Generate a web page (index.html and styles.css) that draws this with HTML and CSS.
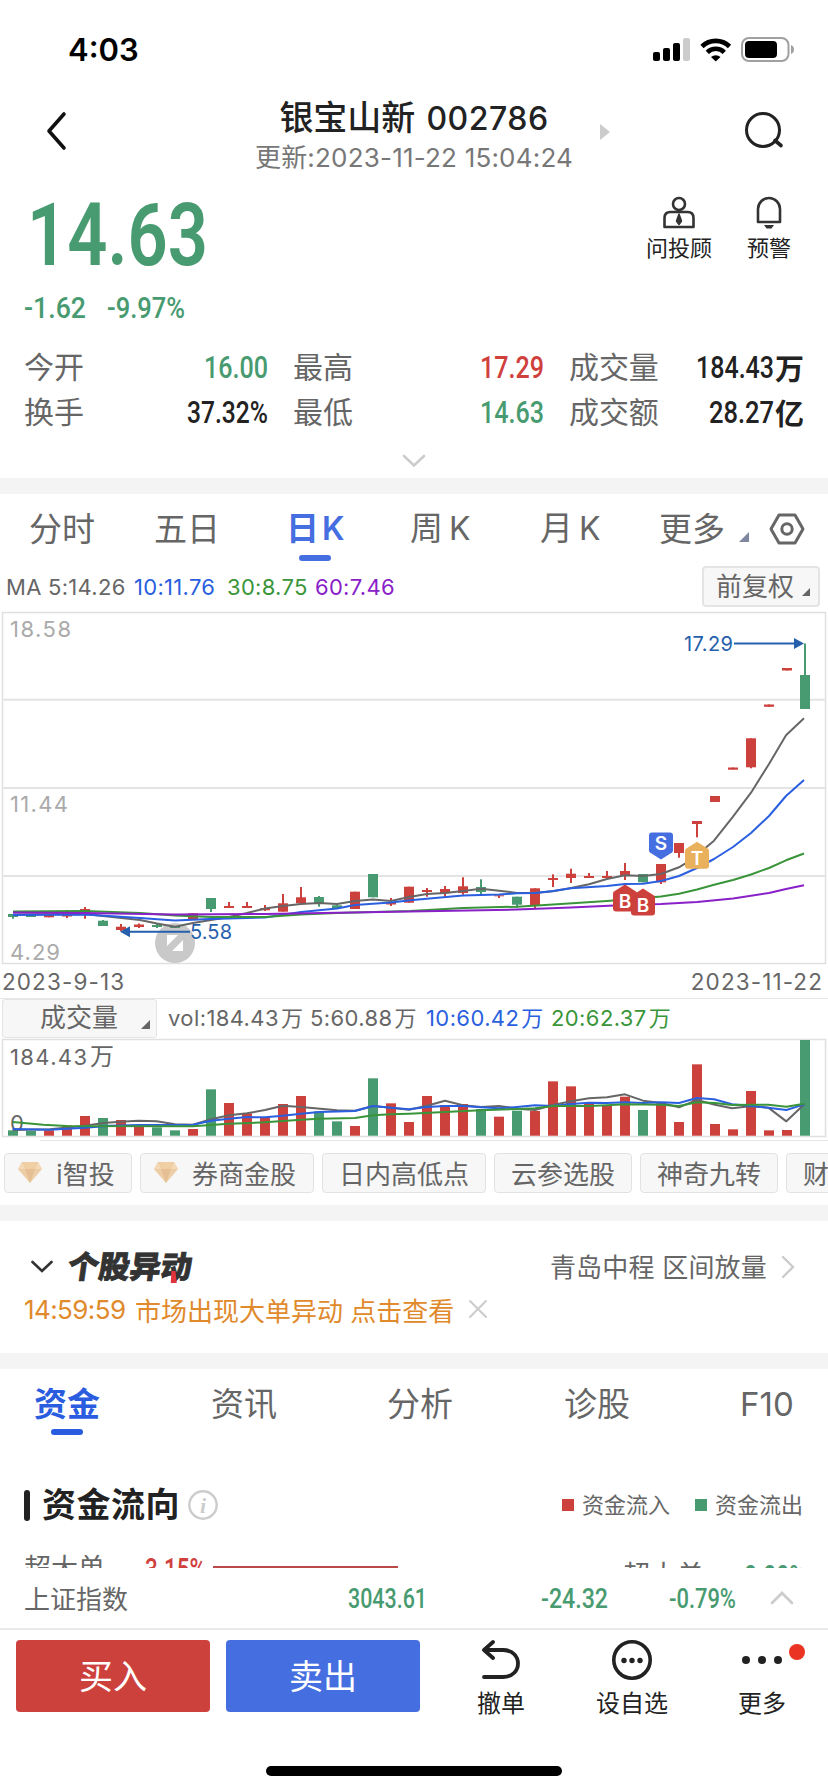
FILE: index.html
```html
<!DOCTYPE html>
<html lang="zh-CN">
<head>
<meta charset="utf-8">
<title>银宝山新 002786</title>
<link rel="stylesheet" href="styles.css">
</head>
<body>
<div class="phone">
  <header class="status">
    <span class="clock">4:03</span>
    <svg class="status-icons" width="144" height="30" viewBox="650 34 144 30">
      <g fill="#000"><rect x="653" y="52" width="7" height="9" rx="2"/><rect x="663" y="48" width="7" height="13" rx="2"/><rect x="673" y="43" width="7" height="18" rx="2"/></g>
      <rect x="683" y="38" width="7" height="23" rx="2" fill="#ccc"/>
      <g fill="none" stroke="#000" stroke-width="4.6">
        <path d="M702 46.500a19.500 19.500 0 0 1 27.500 0"/><path d="M707.300 52.300a12 12 0 0 1 17 0"/>
      </g>
      <path d="M711 57a7 7 0 0 1 9.500 0l-4.750 4.500z" fill="#000"/>
      <rect x="742" y="38" width="46.500" height="23" rx="7" fill="none" stroke="#a0a0a0" stroke-width="2"/>
      <rect x="745" y="41" width="32" height="17" rx="4"/>
      <path d="M791 45v9c4-1 4-8 0-9z" fill="#a0a0a0"/>
    </svg>
  </header>

  <nav class="nav">
    <svg class="back" width="24" height="42" viewBox="0 0 24 42"><path d="M20 4 5 21l15 17" fill="none" stroke="#111" stroke-width="3.600" stroke-linecap="round" stroke-linejoin="round"/></svg>
    <div class="title">
      <div class="name">银宝山新 <span class="code">002786</span></div>
      <div class="updated">更新:2023-11-22 15:04:24</div>
    </div>
    <svg class="next" width="10" height="16" viewBox="0 0 10 16"><path d="M0 0l10 8-10 8z" fill="#ccc"/></svg>
    <svg class="search" width="44" height="40" viewBox="0 0 44 40"><circle cx="21" cy="19" r="16.500" fill="none" stroke="#222" stroke-width="3"/><path d="M33 29.500l6 5" stroke="#222" stroke-width="3.600" stroke-linecap="round"/></svg>
  </nav>

  <section class="quote">
    <div class="price-row">
      <div>
        <svg class="num up price" width="190" height="80"><text x="3" y="74" textLength="181" lengthAdjust="spacingAndGlyphs">14.63</text></svg>
        <svg class="num down change" width="190" height="32"><text x="0" y="28" textLength="62" lengthAdjust="spacingAndGlyphs">-1.62</text><text x="83" y="28" textLength="78" lengthAdjust="spacingAndGlyphs">-9.97%</text></svg>
      </div>
      <div class="actions">
        <div class="action">
          <svg width="34" height="36" viewBox="0 0 34 36" fill="none" stroke="#333" stroke-width="2.600" stroke-linejoin="round"><circle cx="17" cy="9" r="6"/><path d="M2.500 32V23q0-6 6-6h17q6 0 6 6v9z"/><path d="M17 19l2.500 7-2.500 3.500-2.500-3.500z" fill="#333" stroke-width="1.500"/></svg>
          <span>问投顾</span>
        </div>
        <div class="action">
          <svg width="34" height="36" viewBox="0 0 34 36" fill="none" stroke="#333" stroke-width="2.600" stroke-linejoin="round"><path d="M6 27V14a11 11 0 0 1 22 0v13z"/><path d="M12 30h10l-2.500 3.500h-5z" fill="#333" stroke="none"/></svg>
          <span>预警</span>
        </div>
      </div>
    </div>
    <div class="stats">
      <span class="k">今开</span><svg class="num down" width="65" height="30"><text x="1" y="26" textLength="64" lengthAdjust="spacingAndGlyphs">16.00</text></svg>
      <span class="k next-col">最高</span><svg class="num red" width="65" height="30"><text x="1" y="26" textLength="64" lengthAdjust="spacingAndGlyphs">17.29</text></svg>
      <span class="k next-col">成交量</span><span class="unit"><svg class="num" width="79" height="30"><text x="0" y="26" textLength="78" lengthAdjust="spacingAndGlyphs">184.43</text></svg>万</span>
      <span class="k">换手</span><svg class="num" width="82" height="30"><text x="1" y="26" textLength="81" lengthAdjust="spacingAndGlyphs">37.32%</text></svg>
      <span class="k next-col">最低</span><svg class="num down" width="65" height="30"><text x="1" y="26" textLength="64" lengthAdjust="spacingAndGlyphs">14.63</text></svg>
      <span class="k next-col">成交额</span><span class="unit"><svg class="num" width="66" height="30"><text x="0" y="26" textLength="65" lengthAdjust="spacingAndGlyphs">28.27</text></svg>亿</span>
    </div>
    <svg class="expand" width="26" height="16" viewBox="0 0 26 16"><path d="M3 3l10 9.500L23 3" fill="none" stroke="#ccc" stroke-width="2.600" stroke-linecap="round"/></svg>
  </section>

  <section class="chart-card">
    <div class="tabs periods">
      <span>分时</span><span>五日</span><span class="on">日<i>K</i></span><span>周<i>K</i></span><span>月<i>K</i></span>
      <span>更多<svg class="corner" width="10" height="10"><path d="M10 0v10H0z" fill="#7f88a0"/></svg></span>
      <svg width="36" height="34" viewBox="0 0 36 34" fill="none" stroke="#666" stroke-width="3" stroke-linejoin="round"><path d="M10 3h16l8 14-8 14H10L2 17z"/><circle cx="18" cy="17" r="5.200"/></svg>
    </div>
    <div class="ma">
      <span>MA</span><span>5:14.26</span><span class="blue">10:11.76</span><span class="green">30:8.75</span><span class="purple">60:7.46</span>
      <span class="adjust">前复权<svg width="8" height="8"><path d="M8 0v8H0z" fill="#666"/></svg></span>
    </div>
    <svg class="chart" id="kline" width="828" height="360" viewBox="0 608 828 360"></svg>
    <div class="dates"><span>2023-9-13</span><span>2023-11-22</span></div>
    <div class="vol-head">
      <span class="select">成交量<svg width="9" height="9"><path d="M9 0v9H0z" fill="#666"/></svg></span>
      <span>vol:184.43<b>万</b></span><span>5:60.88<b>万</b></span><span class="blue">10:60.42<b>万</b></span><span class="green">20:62.37<b>万</b></span>
    </div>
    <svg class="chart" id="volume" width="828" height="104" viewBox="0 1038 828 104"></svg>
    <div class="chips">
      <span class="chip w1"><svg width="24" height="21" viewBox="0 0 24 21"><use href="#gem"/></svg>i智投</span>
      <span class="chip w2"><svg width="24" height="21" viewBox="0 0 24 21"><use href="#gem"/></svg>券商金股</span>
      <span class="chip w3">日内高低点</span>
      <span class="chip w4">云参选股</span>
      <span class="chip w4">神奇九转</span>
      <span class="chip w5">财务</span>
    </div>
    <svg width="0" height="0" class="defs"><defs><g id="gem"><path d="M4 0h16l4 7-12 14L0 7z" fill="#eccda6"/><path d="M7 7h10l-5 14z" fill="#e6bf94"/><path d="M4 0l3 7H0zM20 0l4 7h-7z" fill="#f3d9b6"/><path d="M8 0h8l1 7H7z" fill="#f0cfa4"/></g></defs></svg>
  </section>

  <section class="alert">
    <div class="alert-top">
      <svg width="24" height="16" viewBox="0 0 24 16"><path d="M2.500 3l9.500 9 9.500-9" fill="none" stroke="#333" stroke-width="2.600" stroke-linecap="round"/></svg>
      <span class="brand">个股异动<svg width="10" height="12"><path d="M2 0h4l3 12H3z" fill="#e2323b"/></svg></span>
      <span class="move">青岛中程 区间放量</span>
      <svg width="16" height="26" viewBox="0 0 16 26"><path d="M3 3l10 10L3 23" fill="none" stroke="#ccc" stroke-width="2.400" stroke-linecap="round"/></svg>
    </div>
    <div class="alert-msg"><span class="time">14:59:59</span><span>市场出现大单异动 点击查看</span><svg width="20" height="20" viewBox="0 0 20 20"><path d="M2 2l16 16M18 2L2 18" stroke="#ccc" stroke-width="2" stroke-linecap="round"/></svg></div>
  </section>

  <section class="funds">
    <div class="tabs info">
      <span class="on">资金</span><span>资讯</span><span>分析</span><span>诊股</span><span>F10</span>
    </div>
    <div class="flow-head">
      <i class="bar"></i><h2>资金流向</h2>
      <svg width="30" height="30" viewBox="0 0 30 30"><circle cx="15" cy="15" r="13.700" fill="none" stroke="#ccc" stroke-width="2.400"/><text x="15" y="23" text-anchor="middle" class="info-i">i</text></svg>
      <span class="legend"><i class="sq in"></i><span>资金流入</span></span><span class="legend second"><i class="sq out"></i><span>资金流出</span></span>
    </div>
    <div class="flow-row">
      <span class="who">超大单</span><svg class="num red" width="64" height="30"><text x="1" y="29" textLength="61" lengthAdjust="spacingAndGlyphs">3.15%</text></svg><i class="line"></i>
      <span class="who right">超大单</span><svg class="num down low" width="64" height="34"><text x="1" y="36" textLength="62" lengthAdjust="spacingAndGlyphs">0.00%</text></svg>
    </div>
  </section>

  <section class="index">
    <span>上证指数</span>
    <svg class="num down" width="80" height="30"><text x="0" y="25" textLength="79" lengthAdjust="spacingAndGlyphs">3043.61</text></svg>
    <svg class="num down" width="68" height="30"><text x="0" y="25" textLength="67" lengthAdjust="spacingAndGlyphs">-24.32</text></svg>
    <svg class="num down" width="68" height="30"><text x="0" y="25" textLength="67" lengthAdjust="spacingAndGlyphs">-0.79%</text></svg>
    <svg width="26" height="16" viewBox="0 0 26 16"><path d="M3 13l10-10 10 10" fill="none" stroke="#ccc" stroke-width="2.800" stroke-linecap="round"/></svg>
  </section>

  <footer class="trade">
    <button class="buy">买入</button><button class="sell">卖出</button>
    <div class="tool t1"><svg width="44" height="44" viewBox="0 0 44 44" fill="none" stroke="#222" stroke-width="3.800" stroke-linecap="round" stroke-linejoin="round"><path d="M14 4L5 12l9 8M6 12h18c20 0 20 27 0 27H5"/></svg><span>撤单</span></div>
    <div class="tool t2"><svg width="44" height="44" viewBox="0 0 44 44"><circle cx="22" cy="22" r="18.200" fill="none" stroke="#222" stroke-width="3.600"/><g fill="#222"><circle cx="14" cy="22.500" r="2.700"/><circle cx="22" cy="22.500" r="2.700"/><circle cx="30" cy="22.500" r="2.700"/></g></svg><span>设自选</span></div>
    <div class="tool t3"><svg width="44" height="44" viewBox="0 0 44 44" fill="#222"><circle cx="6" cy="22" r="4"/><circle cx="22" cy="22" r="4"/><circle cx="38" cy="22" r="4"/></svg><i class="dot"></i><span>更多</span></div>
  </footer>
  <div class="home"></div>
</div>
<script src="chart.js"></script>
</body>
</html>
```

FILE: styles.css
```css
* { box-sizing: border-box; margin: 0; padding: 0; }
body { background: #fff; font-family: Inter, "Noto Sans CJK SC", sans-serif; color: #222; }
i, b { font-style: normal; font-weight: inherit; }
svg { display: block; flex: none; }
span { white-space: nowrap; }
.phone { width: 828px; height: 1792px; overflow: hidden; display: flex; flex-direction: column; }
.phone > * { flex: none; }

.status { height: 92px; display: flex; justify-content: space-between; align-items: flex-start; padding: 34px 34px 0 68px; }
.clock { font-size: 31px; font-weight: 600; line-height: 32px; color: #000; }

.nav { height: 96px; display: grid; grid-template-columns: 154px 432px 124px 1fr; padding-left: 44px; align-items: start; }
.nav .back { margin-top: 18px; }
.title { text-align: center; padding-top: 2px; }
.name { font-size: 34px; line-height: 48px; font-weight: 500; color: #222; }
.code { font-size: 32px; letter-spacing: .5px; margin-left: 2px; }
.updated { font-size: 26px; line-height: 30px; color: #777; letter-spacing: .2px; }
.nav .next { margin: 32px 0 0 -30px; }
.nav .search { margin: 19px 0 0 -12px; }

.num { font-family: Roboto, sans-serif; font-weight: 500; font-size: 31px; fill: #222; overflow: visible; }
.num.down, .num.up { fill: #489b70; }
.num.red { fill: #d0413e; }

.quote { height: 290px; padding: 4px 24px 0; display: flex; flex-direction: column; }
.price-row { display: flex; justify-content: space-between; height: 152px; }
.price { font-size: 87px; font-weight: 600; margin-top: -1px; }
.change { margin-top: 19px; font-size: 30px; }
.actions { display: flex; gap: 35px; padding-right: 13px; }
.action { display: flex; flex-direction: column; align-items: center; font-size: 22px; line-height: 34px; color: #222; padding-top: 3px; }
.stats { display: grid; grid-template-columns: 100px 144px 110px 166px 120px 140px; grid-template-rows: 45px 45px; align-items: center; }
.k { font-size: 30px; line-height: 44px; color: #666; letter-spacing: -.1px; }
.next-col { padding-left: 25px; }
.stats > .num { justify-self: end; }
.unit { display: flex; justify-content: flex-end; align-items: center; font-size: 29px; font-weight: 600; }
.expand { margin: 19px auto 0; }

.chart-card { height: 727px; border-top: 16px solid #f4f4f4; display: flex; flex-direction: column; }
.chart-card > * { flex: none; }
.tabs { display: grid; font-size: 33px; color: #666; }
.tabs span { position: relative; justify-self: start; }
.tabs i { margin-left: 6px; font-size: 32px; }
.tabs .on i { margin-left: 3px; }
.tabs .on { font-weight: 600; color: #456ee0; }
.tabs .on::after { content: ""; position: absolute; left: 50%; bottom: 2px; width: 32px; height: 6px; margin-left: -16px; border-radius: 3px; background: #456ee0; }
.periods { height: 66px; line-height: 68px; padding-left: 29px; grid-template-columns: 125px 132px 124px 130px 119px 110px 1fr; align-items: center; }
.corner { position: absolute; right: -24px; bottom: 21px; }
.ma { height: 48px; display: grid; grid-template-columns: 42px 86px 93px 88px 1fr 118px; padding: 5px 8px 0 6px; align-items: center; font-size: 22px; color: #666; letter-spacing: .3px; }
.adjust { position: relative; height: 41px; line-height: 37px; border: 2px solid #e4e4e4; border-radius: 4px; background: #f7f7f7; padding-left: 12px; font-size: 26px; letter-spacing: 0; }
.adjust svg { position: absolute; right: 8px; bottom: 9px; }
.blue { color: #2a5fe0; }
.green { color: #3a953a; }
.purple { color: #8a20c8; }
.dates { height: 31px; display: flex; justify-content: space-between; padding: 0 5px 0 2px; font-size: 22.5px; line-height: 27px; letter-spacing: 1.1px; color: #666; border-bottom: 1px solid #e6e6e6; }
.vol-head { height: 39px; display: grid; grid-template-columns: 166px 142px 116px 125px 1fr; padding-left: 2px; align-items: start; font-size: 22px; line-height: 38px; letter-spacing: .4px; color: #666; }
.vol-head b { margin-left: 2px; }
.select { position: relative; width: 155px; height: 39px; line-height: 36px; border: 1px solid #e4e4e4; border-radius: 3px; background: #f7f7f7; padding-left: 37px; font-size: 26px; letter-spacing: 0; }
.select svg { position: absolute; right: 6px; bottom: 8px; }
.chips { display: flex; gap: 8px; padding: 11px 0 0 4px; overflow: hidden; }
.chip { height: 40px; display: flex; flex: none; align-items: center; justify-content: center; border: 1px solid #e2e2e2; border-radius: 4px; background: #f7f7f7; font-size: 26px; padding-bottom: 2px; color: #666; }
.chip svg { margin: 0 14px 0 0; }
.w1 { width: 128px; padding-right: 3px; }
.w2 { width: 174px; padding-right: 4px; }
.w3 { width: 164px; }
.w4 { width: 138px; }
.w5 { width: 86px; }
.defs { position: absolute; }

.alert { height: 148px; border-top: 16px solid #f4f4f4; color: #666; }
.alert-top { display: flex; align-items: center; padding: 24px 32px 0 30px; height: 68px; }
.brand { position: relative; margin-left: 14px; font-size: 31px; line-height: 34px; font-weight: 900; color: #333; transform: skewX(-8deg); -webkit-text-stroke: .8px #333; }
.brand svg { position: absolute; right: 12px; bottom: 1px; }
.move { margin: -4px 13px 0 auto; font-size: 26px; letter-spacing: .2px; }
.alert-msg { display: flex; align-items: center; height: 40px; padding-left: 24px; font-size: 26px; color: #e08a2c; }
.alert-msg .time { width: 111px; letter-spacing: -.6px; }
.alert-msg svg { margin-left: 14px; }

.funds { height: 215px; border-top: 16px solid #f4f4f4; overflow: hidden; }
.info { height: 68px; line-height: 70px; padding-left: 34px; grid-template-columns: 177px 176px 177px 176px 1fr; }
.info .on { color: #2a5ce0; }
.info .on::after { background: #2a5ce0; bottom: 4px; }
.flow-head { display: flex; align-items: center; height: 68px; margin-top: 34px; padding: 0 25px 0 24px; }
.bar { width: 6px; height: 31px; border-radius: 3px; background: #222; }
h2 { margin: 0 8px 0 12px; font-size: 34px; line-height: 48px; font-weight: 600; letter-spacing: .5px; }
.info-i { font: italic 700 22px "Liberation Serif", serif; fill: #ccc; }
.legend { display: flex; align-items: center; gap: 8px; margin-left: auto; font-size: 22px; color: #666; }
.legend span { margin-top: -5px; }
.legend.second { margin-left: 25px; }
.sq { width: 12px; height: 12px; background: #cd413d; }
.sq.out { background: #489b70; }
.flow-row { display: flex; align-items: flex-start; padding-left: 24px; margin-top: 12px; }
.who { width: 120px; font-size: 27px; line-height: 36px; color: #666; }
.who.right { margin: 7px 0 0 225px; }
.line { width: 185px; height: 2px; margin: 15px 0 0 5px; background: #b94a48; }

.index { height: 62px; border-bottom: 2px solid #eaeaea; display: grid; grid-template-columns: 324px 193px 128px 100px 1fr; align-items: center; padding-left: 24px; padding-bottom: 1px; font-size: 26px; color: #666; background: #fff; }
.index .num { font-size: 27px; }
.trade { height: 96px; display: flex; padding: 10px 0 0 16px; }
button { width: 194px; height: 72px; margin-right: 16px; padding-bottom: 4px; border: 0; border-radius: 4px; font: 34px Inter, "Noto Sans CJK SC", sans-serif; color: #fff; }
.buy { background: #cd413d; }
.sell { background: #456ee0; }
.tool { position: relative; display: flex; flex-direction: column; align-items: center; font-size: 24px; line-height: 44px; color: #222; width: 80px; margin-top: -2px; }
.t1 { margin-left: 25px; }
.t2 { margin-left: 51px; }
.t3 { margin-left: 50px; }
.dot { position: absolute; left: 67px; top: 6px; width: 16px; height: 16px; border-radius: 50%; background: #ea3323; }
.home { width: 296px; height: 10px; margin: 40px auto 0; border-radius: 5px; background: #000; }

.chart text { font-family: Inter, "Noto Sans CJK SC", sans-serif; font-size: 22px; fill: #666; }
.chart .wan { font-size: 24px; }
.chart .dim { fill: #aaa; }
.chart .tag { fill: #2660ad; font-size: 20px; }
.chart .mark { fill: #fff; font-size: 19px; font-weight: 600; text-anchor: middle; }
```

FILE: chart.js
```js
const RED = '#cd413d', GREEN = '#489b70', GRAY = '#666', BLUE = '#2a5fe0', DGREEN = '#3a953a', PURPLE = '#8a20c8';
const STEP = 18, FIRST = 13;

// Candles: colour, body top, body bottom, wick top, wick bottom
const candles = [
  ['g',914,917,914,918.7],['g',915,917,915,917],['r',915,917.3,915,917.3],['r',915,916.5,910,918],['r',909,915,907,918.7],
  ['g',920.7,926,920,926],['r',926.7,930,924,931],['r',924.5,927,923.5,928],['g',925,927,924,928],['g',926,928,926,928],
  ['r',913.3,920,913.3,920],['g',898,909,898,912],['r',906,908,902,908],['r',906,908,902,908],['r',908,910.3,905,911],
  ['r',903.3,911.7,894,911.7],['r',897.3,903.3,887,903.3],['g',897,903.5,896,906.7],['g',905.3,908,905,909],['r',891.7,909,891.7,909],
  ['g',874,897.3,874,897.3],['r',902.5,904.5,898,906],['r',886.7,902.7,886.7,902.7],['r',890,892,888,896.7],['r',889,893.3,886,896.7],
  ['r',886.3,893,877.3,894.7],['g',887,892,879.3,895],['r',895.3,896.3,895.3,898],['g',896.7,904.7,896.7,907.7],['r',888.3,905.7,888.3,908],
  ['r',878,880,874.3,887],['r',873.7,878,868.7,883],['r',876,878,873,878],['r',876,878,871,878],['r',871,875.3,863,880],
  ['g',874,882.3,874,882.3],['r',864,882.3,864,884],['r',843,853,843,857.7],['r',821,824,821,837.3],['r',796,802,796,802],
  ['r',767.5,769.7,767.5,769.7],['r',738.3,767.3,738.3,768.3],['r',704.5,706.8,704.5,706.8],['r',668,670.5,668,670.5],['g',675,709,643.5,709]
];

// Tops of the volume bars, drawn down to the base line
const volumes = [511,513,511,496,468,474,480,500,502,511,507,388,429,460,472,432,408,454,484,498,355,430,486,408,435,432,447,470,452,453,364,379,430,437,410,450,430,486,313,492,508,393,511,510,240];

const line = (pts, color) => `<polyline points="${pts}" fill="none" stroke="${color}" stroke-width="2" stroke-linejoin="round"/>`;
const rect = (x, y, w, h, c) => `<rect x="${x}" y="${y}" width="${w}" height="${h}" fill="${c}"/>`;
const tint = c => c === 'g' ? GREEN : RED;
const center = i => FIRST + STEP * i;

let k = '<rect x="2.500" y="612.500" width="823" height="351" fill="none" stroke="#e0e0e0" stroke-width="1.500"/>';
[699.7, 788, 876].forEach(y => { k += rect(2, y - 1, 824, 2, '#e4e4e4'); });
k += '<text class="dim" x="10" y="637" textLength="61">18.58</text><text class="dim" x="10" y="812" textLength="58">11.44</text>';
k += '<text class="dim" x="10" y="959.500" textLength="50">4.29</text>';
k += '<g><circle cx="175" cy="943" r="20" fill="#c9c9c9"/><path d="M167 935h11l-11 11zM183 951h-11l11-11z" fill="#fff"/></g>';
candles.forEach(([c, top, bottom, high, low], i) => {
  k += rect(center(i) - 1, high, 2, low - high, tint(c)) + rect(center(i) - 5, top, 10, bottom - top, tint(c));
});
k += line('13,914.500 85,914 103,916 140,920 157,923.500 175,926.700 193,923 211,920 229,917 247,913 265,908.500 283,906 301,904 319,903 337,904 355,901 373,899.500 391,901 409,897 427,894 445,893 463,891 481,888.700 499,890.700 517,893 535,893 553,891.300 571,888 589,884.300 607,879 625,875.300 643,876 661,874 679,867.300 685,863.700 697,855 714,840.700 733,816.700 751,792.700 769,764 786,735.300 804,718.300', GRAY);
k += line('13,915 85,914.500 140,918 175,920.500 210,919 265,917.500 301,912 337,908.500 355,905 391,902.500 410,900.300 463,895.500 499,894.500 517,893.300 535,893 553,891 571,888.300 607,886 625,884 643,883.700 661,881 679,876 697,868 714,859 733,847 751,833 769,816 786,796 804,780', BLUE);
k += line('13,911.500 85,911 140,913 175,915.500 211,917 265,917 301,914.500 337,913 410,911 463,908 517,906.700 553,904.500 607,901 661,896.500 679,893.700 697,889.500 715,884.500 733,880 751,874.500 769,868 786,860.300 804,853.500', DGREEN);
k += line('13,912.500 85,913 175,914.500 265,914 337,912.700 410,911.500 517,909.500 571,907.500 625,905 661,904 697,902 733,898.500 769,893 786,889 804,885.300', PURPLE);
k += '<path d="M130 931.700H190M734 643.500H795" stroke="#2660ad" stroke-width="2"/><path d="M120 931.700l10-5.500v11zM804 643.500l-10-5.500v11z" fill="#2660ad"/>';
k += '<text class="tag" x="190" y="939" textLength="42">5.58</text><text class="tag" x="684" y="651" textLength="49">17.29</text>';
const badge = (x, y, c, t) => `<path d="M${x} ${y}l11 7q1 1 1 2v15q0 3-3 3h-18q-3 0-3-3v-15q0-1 1-2z" fill="${c}"/><text class="mark" x="${x}" y="${y + 23.5}">${t}</text>`;
k += badge(625, 884.500, RED, 'B') + badge(643, 888.500, RED, 'B') + badge(697, 841.700, '#e9b15c', 'T');
k += '<path d="M661 859.500l11-7q1-1 1-2v-15q0-3-3-3h-18q-3 0-3 3v15q0 1 1 2z" fill="#456ee0"/><text class="mark" x="661" y="850">S</text>';
document.getElementById('kline').innerHTML = k;

let v = '<rect x="2.500" y="1039.500" width="823" height="97" fill="none" stroke="#e0e0e0" stroke-width="1.500"/>';
v += rect(40, 1140, 788, 1, '#e6e6e6');
volumes.forEach((p, i) => {
  const y = 960 + p / 3;
  v += rect(center(i) - 5, y, 10, 1135.7 - y, tint(candles[i][0]));
});
v += '<text x="10" y="1065" textLength="77">184.43</text><text class="wan" x="90" y="1065">万</text><text x="10" y="1131">0</text>';
const path = (left, right) => left.map(([x, y]) => `${x / 3},${960 + y / 3}`).concat(right.map(([x, y]) => `${410 + x / 3},${960 + y / 3}`)).join(' ');
v += line(path([[38,510],[150,508],[255,497],[310,489],[360,485],[415,482],[470,484],[525,493],[579,494],[633,478],[687,466],[741,460],[795,450],[849,437],[903,441],[1011,451],[1065,452],[1119,438],[1173,443],[1227,449]], [[51,437],[105,422],[159,436],[213,441],[267,438],[321,446],[375,450],[429,435],[483,424],[537,415],[591,412],[645,403],[699,422],[753,429],[807,442],[861,420],[915,434],[966,445],[1020,439],[1075,443],[1129,484],[1183,433]]), GRAY);
v += line(path([[38,507],[150,509],[255,503],[330,497],[420,495],[579,494],[633,482],[687,476],[741,471],[795,472],[849,467],[903,461],[957,456],[1065,453],[1119,438],[1173,443],[1227,448]], [[51,441],[105,438],[159,438],[213,442],[267,445],[321,441],[375,436],[429,438],[483,432],[537,428],[591,429],[645,427],[699,429],[753,427],[807,429],[861,414],[912,418],[966,433],[1020,437],[1075,443],[1129,450],[1183,433]]), BLUE);
v += line(path([[38,486],[130,494],[200,498],[579,499],[687,491],[795,487],[903,479],[957,476],[1065,474],[1119,466],[1173,463],[1227,461]], [[105,456],[213,451],[321,447],[375,445],[429,438],[537,438],[591,436],[645,433],[753,434],[807,438],[861,427],[915,429],[966,435],[1020,434],[1075,434],[1129,440],[1183,431]]), DGREEN);
document.getElementById('volume').innerHTML = v;
```
